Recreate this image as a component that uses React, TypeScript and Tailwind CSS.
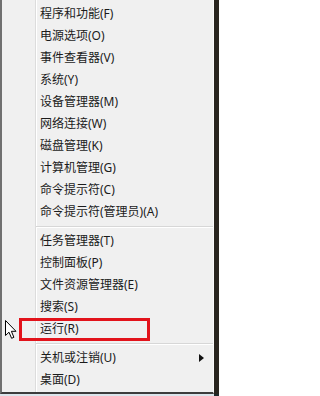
import React from "react";

const groups: string[][] = [
  [
    "程序和功能(F)",
    "电源选项(O)",
    "事件查看器(V)",
    "系统(Y)",
    "设备管理器(M)",
    "网络连接(W)",
    "磁盘管理(K)",
    "计算机管理(G)",
    "命令提示符(C)",
    "命令提示符(管理员)(A)",
  ],
  ["任务管理器(T)", "控制面板(P)", "文件资源管理器(E)", "搜索(S)", "运行(R)"],
  ["关机或注销(U)", "桌面(D)"],
];

export default function App() {
  return (
    <div
      className="relative w-[219px] h-[396px] overflow-hidden bg-[#2a2824] flex flex-col"
      style={{ fontFamily: '"Noto Sans", "Noto Sans CJK SC", sans-serif' }}
    >
      <div className="flex h-[394px]">
        <div className="w-[214px] h-[394px] bg-[#f0f0f0] border-l-2 border-b-2 border-l-[#707070] border-b-[#3c3c3c] border-r border-r-[#fbfbfb] flex">
          <div className="w-[33px] shrink-0" />
          <div className="flex-1 border-l border-l-[#dcdcdc] shadow-[inset_1px_0_0_#ffffff] pt-[3px]">
            {groups.map((g, gi) => (
              <div key={gi}>
                {gi > 0 && (
                  <div className="h-[7px] flex items-center">
                    <div className="w-full h-[2px] border-t border-t-[#d7d7d7] border-b border-b-[#ffffff]" />
                  </div>
                )}
                {g.map((t) => (
                  <div
                    key={t}
                    className="h-[22px] flex items-center pl-[4px] pr-[8px] text-[12px] leading-none text-[#1b1b1b]"
                  >
                    <span className="flex-1 whitespace-nowrap">{t}</span>
                    {t === "关机或注销(U)" && (
                      <svg width="5" height="8" viewBox="0 0 5 8" className="mr-[1px]">
                        <path d="M0 0 L5 4 L0 8 Z" fill="#111" />
                      </svg>
                    )}
                  </div>
                ))}
              </div>
            ))}
          </div>
        </div>
        <div className="flex-1 bg-[#29251f]" />
      </div>
      <div className="flex flex-1">
        <div className="w-[214px] bg-[#dce5ec]" />
        <div className="flex-1 bg-[#1f2a2c]" />
      </div>

      {/* red highlight box */}
      <div className="absolute left-[19px] top-[318px] w-[131px] h-[23px] border-[3px] border-[#e2131b]" />

      {/* mouse cursor */}
      <svg
        className="absolute left-[5px] top-[320px]"
        width="13"
        height="20"
        viewBox="0 0 13 20"
      >
        <path
          d="M0.5 0.5 L0.5 15.5 L4 12.2 L6.6 18.3 L8.9 17.3 L6.4 11.3 L11 11.3 Z"
          fill="#ffffff"
          stroke="#000000"
          strokeWidth="1"
          strokeLinejoin="miter"
        />
      </svg>
    </div>
  );
}
